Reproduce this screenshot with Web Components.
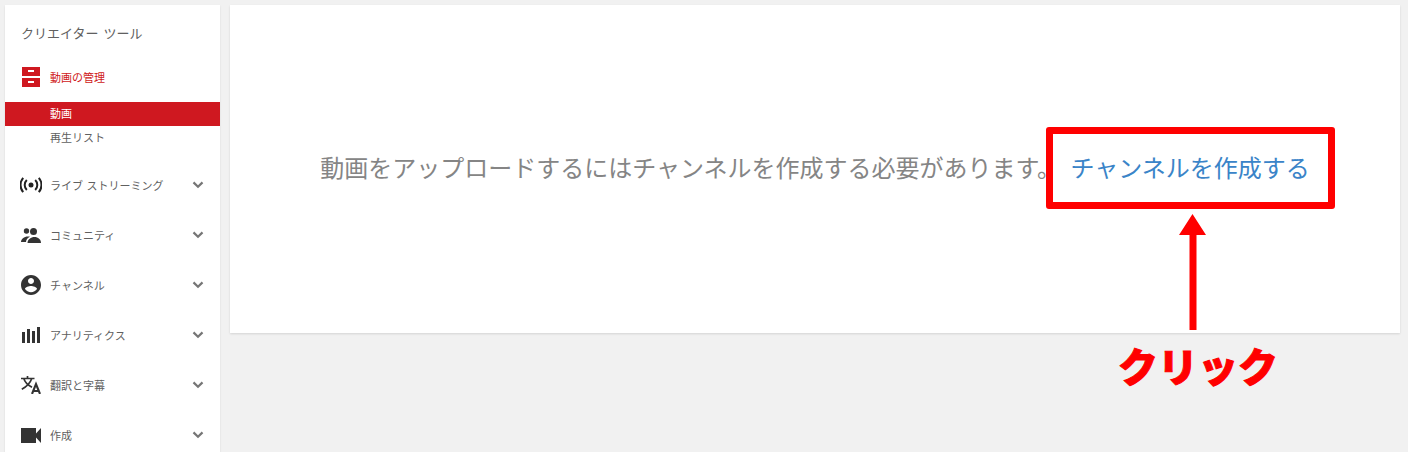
<!DOCTYPE html>
<html lang="ja">
<head>
<meta charset="utf-8">
<title>クリエイター ツール</title>
<style>
  html, body { margin: 0; height: 100%; }
  body {
    width: 1408px;
    height: 452px;
    overflow: hidden;
    position: relative;
    background: #f1f1f1;
    font-family: "Noto Sans CJK JP", "Noto Sans", sans-serif;
  }
  svg { display: block; }
</style>
</head>
<body>
<studio-page>
  <studio-sidebar>
    <side-title>クリエイター ツール</side-title>
    <side-section label="動画の管理" active>
      <svg slot="icon" width="18" height="20" viewBox="0 0 18 20"><path fill="#cf1820" d="M0 0h18v9H0zM0 11h18v9H0z"/><path fill="#fff" d="M6 3h6v2H6zM6 14h6v2H6z"/></svg>
      <side-link selected>動画</side-link>
      <side-link>再生リスト</side-link>
    </side-section>
    <side-section label="ライブ ストリーミング" more>
      <svg slot="icon" width="22" height="16" viewBox="0 0 22 16" fill="none" stroke="#222" stroke-width="2"><circle cx="11" cy="8" r="2.500" fill="#222" stroke="none"/><path d="M6.800 3a7 7 0 0 0 0 10M15.200 3a7 7 0 0 1 0 10M3.200.8a11 11 0 0 0 0 14.400M18.800.8a11 11 0 0 1 0 14.400"/></svg>
    </side-section>
    <side-section label="コミュニティ" more>
      <svg slot="icon" width="20" height="15" viewBox="0 0 20 15"><g fill="#333"><circle cx="5.500" cy="3" r="2.700"/><circle cx="12.500" cy="3.500" r="3.500"/><path d="M0 14c0-3 3-5.500 7-5.500 1 0 1.500.1 2 .3C6.500 10 5 12 5 14z"/><path d="M6.500 15c0-3.500 3.500-6 7-6s6.500 2.500 6.500 6z"/></g></svg>
    </side-section>
    <side-section label="チャンネル" more>
      <svg slot="icon" width="20" height="20" viewBox="2 2 20 20"><path fill="#333" d="M12 2C6.480 2 2 6.480 2 12s4.480 10 10 10 10-4.480 10-10S17.520 2 12 2zm0 3c1.660 0 3 1.340 3 3s-1.340 3-3 3-3-1.340-3-3 1.340-3 3-3zm0 14.200c-2.500 0-4.710-1.280-6-3.220.03-1.990 4-3.080 6-3.080 1.990 0 5.970 1.090 6 3.080-1.290 1.940-3.500 3.220-6 3.220z"/></svg>
    </side-section>
    <side-section label="アナリティクス" more>
      <svg slot="icon" width="18" height="16" viewBox="0 0 18 16"><path fill="#333" d="M0 5h3v11H0zM5 2h3v14H5zM10 4h3v12h-3zM15 0h3v16h-3z"/></svg>
    </side-section>
    <side-section label="翻訳と字幕" more>
      <svg slot="icon" width="20" height="18" viewBox="0 0 20 18" fill="none" stroke="#333" stroke-width="1.700"><path d="M0 2.500h13.500M6.500 0v2.500M10.800 2.500C9 7.500 5 11 .8 13.300M2.800 2.500C4 6.500 7.500 9.500 11 11.300"/><path stroke-width="2.100" d="M11 18l4-10 4 10M12.300 15h5.400"/></svg>
    </side-section>
    <side-section label="作成" more>
      <svg slot="icon" width="20" height="15" viewBox="0 0 20 15"><path fill="#333" d="M0 0h15v15H0zM15 5.500L20 0v15l-5-5.500z"/></svg>
    </side-section>
  </studio-sidebar>
  <studio-main>
    動画をアップロードするにはチャンネルを作成する必要があります。<a slot="link" href="#">チャンネルを作成する</a>
  </studio-main>
</studio-page>
<click-callout>クリック</click-callout>

<script>
class StudioPage extends HTMLElement {
  constructor() {
    super();
    this.attachShadow({ mode: "open" });
    this.shadowRoot.innerHTML = `
      <style>
        :host { display: flex; gap: 10px; padding: 5px 8px 0 5px; height: 447px; box-sizing: content-box; overflow: hidden; }
      </style>
      <slot></slot>`;
  }
}

class StudioSidebar extends HTMLElement {
  constructor() {
    super();
    this.attachShadow({ mode: "open" });
    this.shadowRoot.innerHTML = `
      <style>
        :host { display: block; flex: 0 0 215px; background: #fff; height: 480px; box-shadow: 0 1px 2px rgba(0,0,0,.1); }
      </style>
      <slot></slot>`;
  }
}

class SideTitle extends HTMLElement {
  constructor() {
    super();
    this.attachShadow({ mode: "open" });
    this.shadowRoot.innerHTML = `
      <style>
        :host { display: block; padding: 18px 0 0 16px; height: 34px; font-size: 13px; line-height: 20px; color: #606060; word-spacing: 2px; }
      </style>
      <slot></slot>`;
  }
}

class SideSection extends HTMLElement {
  constructor() {
    super();
    this.attachShadow({ mode: "open" });
    const label = this.getAttribute("label");
    // the chevron is only on the closed sections
    const chevron = this.hasAttribute("more")
      ? `<svg class="chev" width="12" height="8" viewBox="0 0 12 8"><path d="M1.500 1.400L6 5.800l4.500-4.400" fill="none" stroke="#767676" stroke-width="2.200"/></svg>`
      : "";
    this.shadowRoot.innerHTML = `
      <style>
        :host { display: block; }
        :host([more]) { height: 50px; }
        .row { display: flex; align-items: center; height: 40px; padding-left: 15px; font-size: 11px; color: #606060; word-spacing: 1px; }
        :host([active]) .row { color: #cf1820; }
        .icon { width: 30px; display: flex; justify-content: center; flex: none; padding-right: 8px; box-sizing: border-box; }
        .label { flex: 1; line-height: 20px; }
        .chev { display: block; margin-right: 16px; }
        .links { margin-top: 5px; padding-bottom: 15px; }
      </style>
      <div class="row"><span class="icon"><slot name="icon"></slot></span><span class="label">${label}</span>${chevron}</div>
      <div class="links"><slot></slot></div>`;
  }
}

class SideLink extends HTMLElement {
  constructor() {
    super();
    this.attachShadow({ mode: "open" });
    this.shadowRoot.innerHTML = `
      <style>
        :host { display: block; height: 24px; line-height: 22px; padding-left: 45px; font-size: 11px; color: #606060; }
        :host([selected]) { background: #cf1820; color: #fff; }
      </style>
      <slot></slot>`;
  }
}

class StudioMain extends HTMLElement {
  constructor() {
    super();
    this.attachShadow({ mode: "open" });
    this.shadowRoot.innerHTML = `
      <style>
        :host { display: flex; flex: 0 0 1170px; height: 328px; box-sizing: border-box; padding-bottom: 6px; align-items: center; justify-content: center; background: #fff; box-shadow: 0 1px 2px rgba(0,0,0,.12); font-size: 24px; color: #858585; white-space: nowrap; }
        ::slotted(a) { color: #3a84c8; text-decoration: none; margin-left: 4px; }
      </style>
      <div><slot></slot><slot name="link"></slot></div>`;
  }
}

// the red box, the arrow and the label lie over the page
class ClickCallout extends HTMLElement {
  constructor() {
    super();
    this.attachShadow({ mode: "open" });
    this.shadowRoot.innerHTML = `
      <style>
        :host { display: block; position: absolute; left: 1046px; top: 127px; width: 289px; height: 270px; }
        .box { width: 289px; height: 82px; box-sizing: border-box; border: 7px solid #f00; border-radius: 3px; }
        svg { display: block; margin: 5px 0 0 133px; }
        .label { position: absolute; left: 72px; top: 205px; font-size: 40px; font-weight: 900; line-height: 66px; color: #f00; white-space: nowrap; -webkit-text-stroke: 1px #f00; }
      </style>
      <div class="box"></div>
      <svg width="28" height="116" viewBox="0 0 28 116"><path fill="#f00" d="M13.500 0L27 21H17.500v95h-7V21H0z"/></svg>
      <div class="label"><slot></slot></div>`;
  }
}

customElements.define("studio-page", StudioPage);
customElements.define("studio-sidebar", StudioSidebar);
customElements.define("side-title", SideTitle);
customElements.define("side-section", SideSection);
customElements.define("side-link", SideLink);
customElements.define("studio-main", StudioMain);
customElements.define("click-callout", ClickCallout);
</script>
</body>
</html>
